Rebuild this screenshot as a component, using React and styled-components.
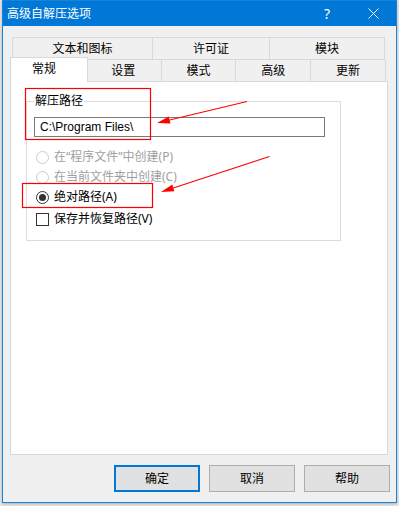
import styled, { createGlobalStyle } from "styled-components";

const GlobalStyle = createGlobalStyle`
  html, body {
    margin: 0;
    padding: 0;
    background: #e9e9e9;
  }
  body {
    font-family: "Noto Sans", "Noto Sans CJK SC", sans-serif;
    font-size: 12px;
    color: #000;
  }
`;

const Page = styled.div`
  position: relative;
  width: 399px;
  height: 506px;
  overflow: hidden;
`;

const Window = styled.div`
  margin-left: 2px;
  width: 395px;
  height: 503px;
  box-sizing: border-box;
  border: 1px solid #1883d7;
  background: #f0f0f0;
  display: flex;
  flex-direction: column;
  box-shadow: 0 1px 3px rgba(0, 0, 0, 0.25);
`;

const TitleBar = styled.div`
  height: 25px;
  background: #0078d7;
  color: #fff;
  display: flex;
  align-items: center;
  padding-left: 4px;
  flex-shrink: 0;
`;

const TitleText = styled.span`
  flex: 1;
  font-size: 12px;
  line-height: 16px;
`;

const TitleButton = styled.div`
  width: 46px;
  height: 25px;
  display: flex;
  align-items: center;
  justify-content: center;
  font-size: 14px;
`;

const Body = styled.div`
  flex: 1;
  display: flex;
  flex-direction: column;
  padding: 11px 8px 10px 7px;
`;

const TabRow = styled.div`
  display: flex;
  height: 22px;
  padding: 0 2px;
  align-items: flex-end;
`;

const Tab = styled.div`
  width: ${(p) => p.$w}px;
  height: ${(p) => (p.$active ? 25 : 22)}px;
  box-sizing: border-box;
  border: 1px solid #d9d9d9;
  border-bottom: none;
  margin-left: -1px;
  &:first-child {
    margin-left: 0;
  }
  background: ${(p) => (p.$active ? "#fff" : "#f0f0f0")};
  display: flex;
  align-items: center;
  justify-content: center;
  font-size: 12px;
  line-height: 16px;
  padding-bottom: ${(p) => (p.$active ? 3 : 0)}px;
  ${(p) =>
    p.$active &&
    `
    position: relative;
    z-index: 2;
    margin: 0 -2px -1px -2px !important;
    padding-right: 10px;
  `}
`;

const Panel = styled.div`
  flex: 1;
  background: #fff;
  border: 1px solid #d9d9d9;
  display: flex;
  flex-direction: column;
  align-items: flex-start;
`;

const Group = styled.fieldset`
  margin: 11px 0 0 15px;
  width: 315px;
  box-sizing: border-box;
  border: 1px solid #dcdcdc;
  padding: 0 15px 11px 7px;
`;

const Legend = styled.legend`
  padding: 0 1px;
  font-size: 12px;
  line-height: 16px;
`;

const PathInput = styled.input`
  display: block;
  margin-top: 8px;
  width: 291px;
  height: 20px;
  box-sizing: border-box;
  border: 1px solid #7a7a7a;
  padding: 0 5px;
  font-family: "Liberation Sans", sans-serif;
  font-size: 12px;
  color: #000;
  outline: none;
  background: #fff;
`;

const Options = styled.div`
  margin-top: 10px;
  display: flex;
  flex-direction: column;
`;

const OptionRow = styled.label`
  height: 20px;
  display: flex;
  align-items: center;
  gap: 5px;
  padding-left: 2px;
  margin-top: ${(p) => p.$gap || 0}px;
  color: ${(p) => (p.$disabled ? "#a0a0a0" : "#000")};
  font-size: 12px;
  line-height: 16px;
`;

const Radio = styled.span`
  width: 13px;
  height: 13px;
  box-sizing: border-box;
  border-radius: 50%;
  border: 1px solid ${(p) => (p.$disabled ? "#cccccc" : "#333")};
  background: #fff;
  display: flex;
  align-items: center;
  justify-content: center;
  &::after {
    content: "";
    width: 7px;
    height: 7px;
    border-radius: 50%;
    background: #333;
    display: ${(p) => (p.$checked ? "block" : "none")};
  }
`;

const Check = styled.span`
  width: 13px;
  height: 13px;
  box-sizing: border-box;
  border: 1px solid #333;
  background: #fff;
`;

const ButtonRow = styled.div`
  display: flex;
  justify-content: flex-end;
  gap: 9px;
  margin: 10px -2px 0 0;
`;

const Button = styled.div`
  width: 86px;
  height: 27px;
  box-sizing: border-box;
  background: #e1e1e1;
  border: ${(p) => (p.$primary ? "2px solid #0078d7" : "1px solid #adadad")};
  display: flex;
  align-items: center;
  justify-content: center;
  font-size: 12px;
  line-height: 16px;
`;

const Annotations = styled.svg`
  position: absolute;
  left: 0;
  top: 0;
  pointer-events: none;
`;

const topTabs = [
  ["文本和图标", 141],
  ["许可证", 118],
  ["模块", 116],
];

const bottomTabs = [
  ["常规", 78, true],
  ["设置", 77],
  ["模式", 76],
  ["高级", 76],
  ["更新", 76],
];

export default function App() {
  return (
    <Page>
      <GlobalStyle />
      <Window>
        <TitleBar>
          <TitleText>高级自解压选项</TitleText>
          <TitleButton>?</TitleButton>
          <TitleButton>
            <svg width="11" height="11" viewBox="0 0 11 11">
              <path d="M0.5 0.5 L10.5 10.5 M10.5 0.5 L0.5 10.5" stroke="#fff" strokeWidth="1" />
            </svg>
          </TitleButton>
        </TitleBar>
        <Body>
          <TabRow>
            {topTabs.map(([t, w]) => (
              <Tab key={t} $w={w}>{t}</Tab>
            ))}
          </TabRow>
          <TabRow>
            {bottomTabs.map(([t, w, a]) => (
              <Tab key={t} $w={w} $active={a}>{t}</Tab>
            ))}
          </TabRow>
          <Panel>
            <Group>
              <Legend>解压路径</Legend>
              <PathInput defaultValue="C:\Program Files\" readOnly />
              <Options>
                <OptionRow $disabled>
                  <Radio $disabled />
                  在“程序文件”中创建(P)
                </OptionRow>
                <OptionRow $disabled>
                  <Radio $disabled />
                  在当前文件夹中创建(C)
                </OptionRow>
                <OptionRow>
                  <Radio $checked />
                  绝对路径(A)
                </OptionRow>
                <OptionRow $gap={2}>
                  <Check />
                  保存并恢复路径(V)
                </OptionRow>
              </Options>
            </Group>
          </Panel>
          <ButtonRow>
            <Button $primary>确定</Button>
            <Button>取消</Button>
            <Button>帮助</Button>
          </ButtonRow>
        </Body>
      </Window>
      <Annotations width="399" height="506">
        <rect x="25.5" y="88.5" width="125" height="51" fill="none" stroke="#ff0000" strokeWidth="1.2" />
        <rect x="22.5" y="183.5" width="130" height="24" fill="none" stroke="#ff0000" strokeWidth="1.2" />
        <line x1="247" y1="101.5" x2="169.6" y2="120" stroke="#ff0000" strokeWidth="1.2" />
        <polygon points="157,123 170.5,123.4 168.8,116.6" fill="#ff0000" />
        <line x1="269.5" y1="156.5" x2="173.3" y2="188" stroke="#ff0000" strokeWidth="1.2" />
        <polygon points="161,192 174.4,191.3 172.3,184.6" fill="#ff0000" />
      </Annotations>
    </Page>
  );
}
